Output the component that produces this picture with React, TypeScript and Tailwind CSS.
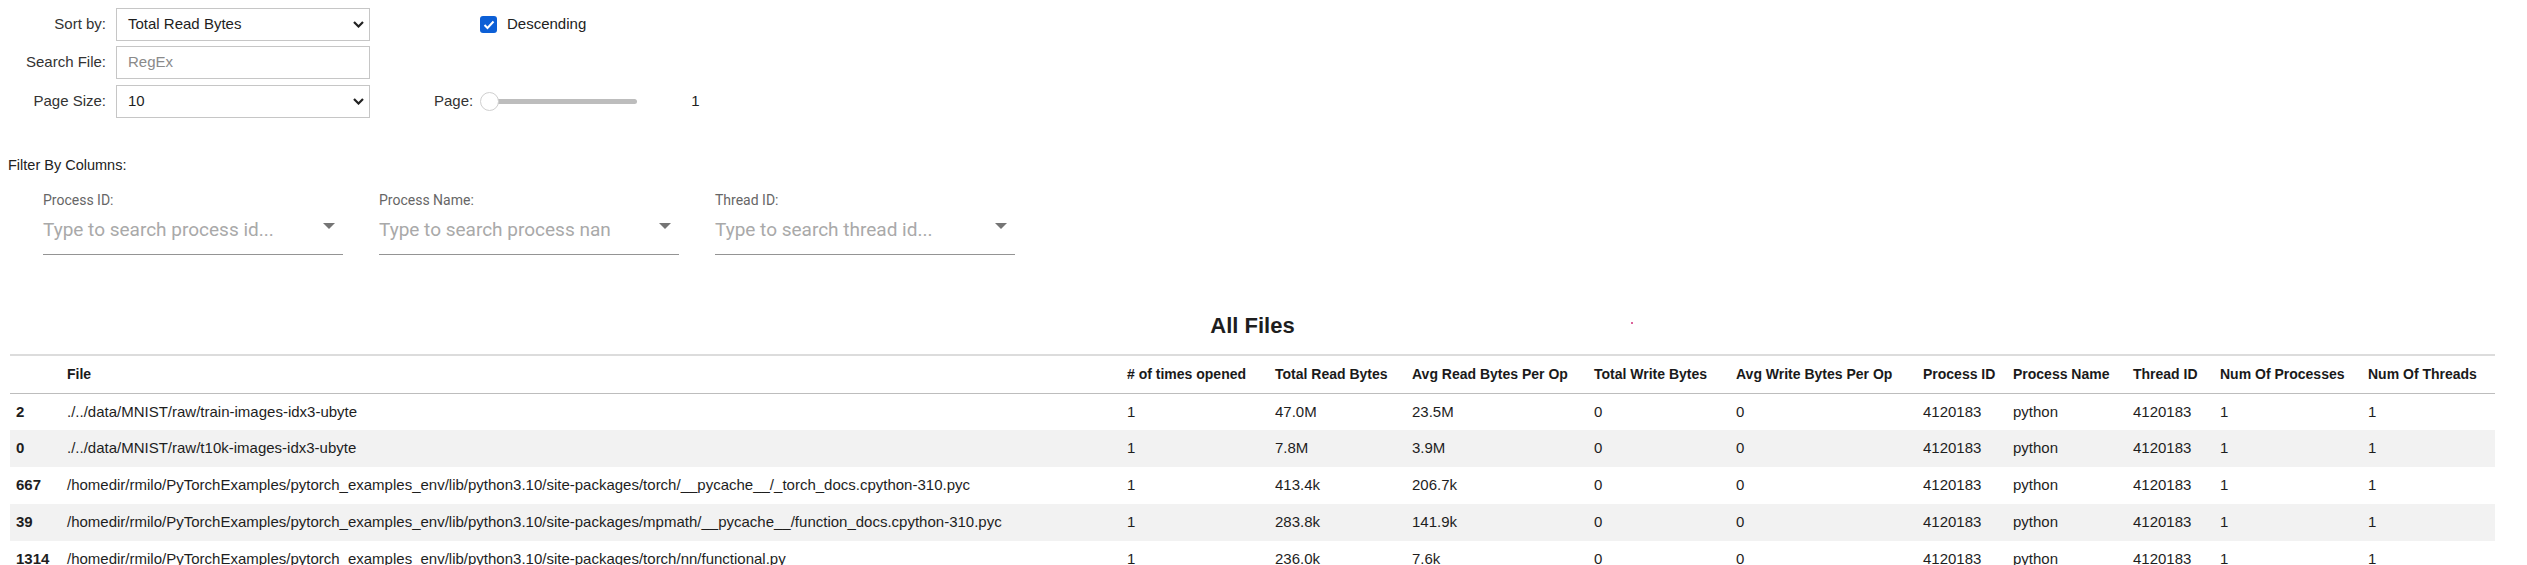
import React from "react";

const rows = [
  ["2", "./../data/MNIST/raw/train-images-idx3-ubyte", "1", "47.0M", "23.5M"],
  ["0", "./../data/MNIST/raw/t10k-images-idx3-ubyte", "1", "7.8M", "3.9M"],
  ["667", "/homedir/rmilo/PyTorchExamples/pytorch_examples_env/lib/python3.10/site-packages/torch/__pycache__/_torch_docs.cpython-310.pyc", "1", "413.4k", "206.7k"],
  ["39", "/homedir/rmilo/PyTorchExamples/pytorch_examples_env/lib/python3.10/site-packages/mpmath/__pycache__/function_docs.cpython-310.pyc", "1", "283.8k", "141.9k"],
  ["1314", "/homedir/rmilo/PyTorchExamples/pytorch_examples_env/lib/python3.10/site-packages/torch/nn/functional.py", "1", "236.0k", "7.6k"],
];

const headers = [
  "",
  "File",
  "# of times opened",
  "Total Read Bytes",
  "Avg Read Bytes Per Op",
  "Total Write Bytes",
  "Avg Write Bytes Per Op",
  "Process ID",
  "Process Name",
  "Thread ID",
  "Num Of Processes",
  "Num Of Threads",
];

function Chevron() {
  return (
    <svg width="11" height="7" viewBox="0 0 11 7" className="shrink-0">
      <polyline points="1,1 5.5,5.5 10,1" fill="none" stroke="#222" strokeWidth="2.2" />
    </svg>
  );
}

function SelectBox({ value }: { value: string }) {
  return (
    <div className="flex h-[33px] w-[254px] items-center justify-between border border-[#c6c6c6] bg-white pl-[11px] pr-[5px] text-[15px] text-[#1e1e1e]">
      <span>{value}</span>
      <Chevron />
    </div>
  );
}

function Label({ children }: { children: React.ReactNode }) {
  return <div className="w-[106px] text-right text-[15px] text-[#333]">{children}</div>;
}

function FilterField({ label, placeholder }: { label: string; placeholder: string }) {
  return (
    <div className="w-[300px]" style={{ fontFamily: "Roboto, 'Liberation Sans', sans-serif" }}>
      <div className="h-[18px] text-[14px] leading-[18px] text-[#666]">{label}</div>
      <div className="mt-[8px] flex h-[38px] items-start justify-between border-b border-[#949494]">
        <span className="whitespace-nowrap text-[19px] leading-[26px] text-[#a9a9a9]">{placeholder}</span>
        <svg width="12" height="6" viewBox="0 0 12 6" className="mr-[8px] mt-[6px]">
          <polygon points="0,0 12,0 6,6" fill="#757575" />
        </svg>
      </div>
    </div>
  );
}

export default function App() {
  return (
    <div
      className="relative h-[565px] w-[2527px] overflow-hidden bg-white text-[#1e1e1e]"
      style={{ fontFamily: "'Liberation Sans', Arial, sans-serif" }}
    >
      <div className="flex flex-col gap-[5px] pt-[8px]">
        <div className="flex items-center">
          <Label>Sort by:</Label>
          <div className="ml-[10px]">
            <SelectBox value="Total Read Bytes" />
          </div>
          <div className="ml-[110px] flex items-center">
            <div className="flex h-[17px] w-[17px] items-center justify-center rounded-[3px] bg-[#0c5fd6]">
              <svg width="12" height="10" viewBox="0 0 12 10">
                <polyline points="1.5,5 4.5,8 10.5,1.5" fill="none" stroke="#fff" strokeWidth="2" />
              </svg>
            </div>
            <span className="ml-[10px] text-[15px] text-[#222]">Descending</span>
          </div>
        </div>
        <div className="flex items-center">
          <Label>Search File:</Label>
          <div className="ml-[10px] flex h-[33px] w-[254px] items-center border border-[#c6c6c6] pl-[11px] text-[15px] text-[#8a8a8a]">
            RegEx
          </div>
        </div>
        <div className="mt-[1px] flex items-center">
          <Label>Page Size:</Label>
          <div className="ml-[10px]">
            <SelectBox value="10" />
          </div>
          <span className="ml-[64px] text-[15px] text-[#333]">Page:</span>
          <div className="relative ml-[7px] flex h-[20px] w-[157px] items-center">
            <div className="ml-[10px] h-[5px] w-[147px] rounded-full bg-[#bdbdbd]" />
            <div className="absolute left-0 top-[0.5px] h-[19px] w-[19px] rounded-full border border-[#cfcfcf] bg-white" />
          </div>
          <span className="ml-[54px] text-[15px] text-[#222]">1</span>
        </div>
      </div>

      <div className="ml-[8px] mt-[37px] h-[20px] text-[14.5px] leading-[20px] text-[#222]">Filter By Columns:</div>

      <div className="ml-[43px] mt-[16px] flex gap-[36px]">
        <FilterField label="Process ID:" placeholder="Type to search process id..." />
        <FilterField label="Process Name:" placeholder="Type to search process nan" />
        <FilterField label="Thread ID:" placeholder="Type to search thread id..." />
      </div>

      <div className="ml-[10px] mt-[57px] w-[2485px]">
        <div className="relative h-[28px] text-center text-[22px] font-bold leading-[28px] text-[#1e1e1e]">
          All Files
          <span className="absolute left-[1621px] top-[10px] h-[2px] w-[2px] rounded-full bg-[#d0307a]" />
        </div>
        <table className="mt-[14px] w-[2485px] table-fixed border-collapse text-left">
          <colgroup>
            <col className="w-[49px]" />
            <col className="w-[1060px]" />
            <col className="w-[148px]" />
            <col className="w-[137px]" />
            <col className="w-[182px]" />
            <col className="w-[142px]" />
            <col className="w-[187px]" />
            <col className="w-[90px]" />
            <col className="w-[120px]" />
            <col className="w-[87px]" />
            <col className="w-[148px]" />
            <col className="w-[135px]" />
          </colgroup>
          <thead>
            <tr className="h-[38px] border-t-2 border-b-[1.5px] border-t-[#dcdcdc] border-b-[#bdbdbd]">
              {headers.map((h, i) => (
                <th
                  key={i}
                  className={`whitespace-nowrap p-0 text-[14px] font-bold text-[#1a1a1a] ${i === 0 ? "pl-[6px]" : "pl-[8px]"}`}
                >
                  {h}
                </th>
              ))}
            </tr>
          </thead>
          <tbody>
            {rows.map((r, i) => {
              const cells = [r[0], r[1], r[2], r[3], r[4], "0", "0", "4120183", "python", "4120183", "1", "1"];
              return (
                <tr key={i} className={`h-[37px] ${i % 2 === 1 ? "bg-[#f2f2f2]" : "bg-white"}`}>
                  {cells.map((c, j) => (
                    <td
                      key={j}
                      className={`whitespace-nowrap p-0 text-[15px] text-[#1e1e1e] ${j === 0 ? "pl-[6px] font-bold" : "pl-[8px]"}`}
                    >
                      {c}
                    </td>
                  ))}
                </tr>
              );
            })}
          </tbody>
        </table>
      </div>
    </div>
  );
}
